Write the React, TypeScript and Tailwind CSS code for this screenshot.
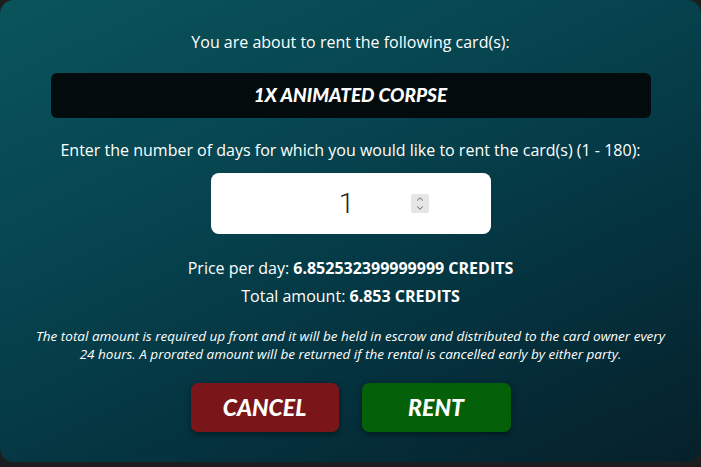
import { ChevronDown, ChevronUp } from 'lucide-react'

const rental = {
  card: '1x Animated Corpse',
  minDays: 1,
  maxDays: 180,
  pricePerDay: '6.852532399999999',
  total: '6.853',
}

export default function App() {
  return (
    <div className="h-[467px] w-full bg-[#1b1d1e] font-['Open_Sans',sans-serif]">
      <div className="flex h-[462px] flex-col items-center rounded-[14px] bg-[linear-gradient(155deg,#0a545b_0%,#064550_35%,#043440_65%,#06202a_100%)] pt-[31px] text-white">
        <p className="text-[16px] leading-[22px]">You are about to rent the following card(s):</p>

        <div className="mt-[20px] flex h-[45px] w-[600px] items-center justify-center rounded-[6px] bg-[#040b0d]">
          <span className="font-['Lato',sans-serif] text-[19px] font-black italic uppercase">
            {rental.card}
          </span>
        </div>

        <p className="mt-[21px] text-[16px] leading-[22px]">
          Enter the number of days for which you would like to rent the card(s) ({rental.minDays} - {rental.maxDays}):
        </p>

        <div className="mt-[12px] flex h-[61px] w-[280px] items-center rounded-[8px] bg-white pl-[72px] pr-[62px]">
          <span className="flex-1 text-center font-['Roboto',sans-serif] text-[28px] font-light leading-none text-[#222]">1</span>
          <span className="flex h-[19px] w-[18px] flex-col items-center justify-center rounded-[2px] bg-[#e6e6e6] text-[#777]">
            <ChevronUp className="-mb-[1px] size-[10px]" strokeWidth={2.5} />
            <ChevronDown className="size-[10px]" strokeWidth={2.5} />
          </span>
        </div>

        <p className="mt-[23px] text-[16px] leading-[22px]">
          Price per day: <span className="font-bold">{rental.pricePerDay} CREDITS</span>
        </p>
        <p className="mt-[6px] text-[16px] leading-[22px]">
          Total amount: <span className="font-bold">{rental.total} CREDITS</span>
        </p>

        <p className="mt-[20px] w-[636px] text-center text-[13.5px] italic leading-[18px]">
          The total amount is required up front and it will be held in escrow and distributed to the card owner every
          24 hours. A prorated amount will be returned if the rental is cancelled early by either party.
        </p>

        <div className="mt-[20px] flex gap-[23px]">
          <button className="h-[49px] w-[148px] rounded-[7px] bg-[#7a1619] font-['Lato',sans-serif] text-[23px] font-black italic shadow-[0_2px_6px_rgba(0,0,0,0.45)]">
            CANCEL
          </button>
          <button className="h-[49px] w-[149px] rounded-[7px] bg-[#05600a] font-['Lato',sans-serif] text-[23px] font-black italic shadow-[0_2px_6px_rgba(0,0,0,0.45)]">
            RENT
          </button>
        </div>
      </div>
    </div>
  )
}
